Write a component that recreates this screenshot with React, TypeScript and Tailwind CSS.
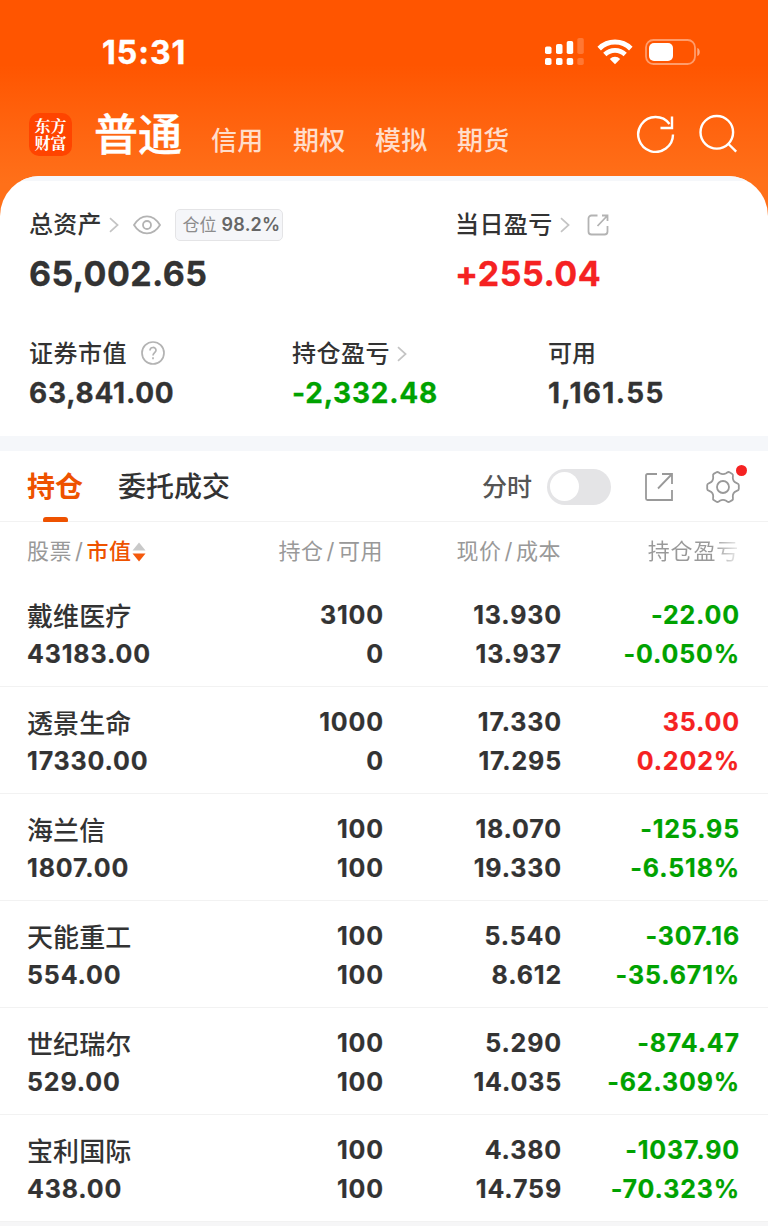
import clsx from 'clsx';

const accounts = ['信用', '期权', '模拟', '期货'];

const holdings = [
  { name: '戴维医疗', value: '43183.00', amount: '3100', available: '0', price: '13.930', cost: '13.937', profit: '-22.00', percent: '-0.050%' },
  { name: '透景生命', value: '17330.00', amount: '1000', available: '0', price: '17.330', cost: '17.295', profit: '35.00', percent: '0.202%' },
  { name: '海兰信', value: '1807.00', amount: '100', available: '100', price: '18.070', cost: '19.330', profit: '-125.95', percent: '-6.518%' },
  { name: '天能重工', value: '554.00', amount: '100', available: '100', price: '5.540', cost: '8.612', profit: '-307.16', percent: '-35.671%' },
  { name: '世纪瑞尔', value: '529.00', amount: '100', available: '100', price: '5.290', cost: '14.035', profit: '-874.47', percent: '-62.309%' },
  { name: '宝利国际', value: '438.00', amount: '100', available: '100', price: '4.380', cost: '14.759', profit: '-1037.90', percent: '-70.323%' },
];

function Chevron({ className }: { className?: string }) {
  return (
    <svg viewBox="0 0 10 16" fill="none" stroke="#c4c4c4" strokeWidth="1.7" className={clsx('h-4 w-2.5 shrink-0', className)}>
      <path d="M1 1.2 8.6 8 1 14.8" />
    </svg>
  );
}

function StatusBar() {
  return (
    <div className="flex h-[104px] items-center pl-[102px] pr-[67px]">
      <span className="pt-[2px] text-[32px] font-bold leading-none tracking-[1px] [-webkit-text-stroke:0.4px_white]">15:31</span>
      <svg viewBox="0 0 40 28" fill="#fff" className="ml-auto h-7 w-10">
        <rect x="1" y="8.5" width="6.5" height="7.5" rx="1.8" />
        <rect x="12" y="6" width="6.5" height="10" rx="1.8" />
        <rect x="22.7" y="3" width="6.5" height="13" rx="1.8" />
        <rect x="33.3" y="0" width="6.5" height="16" rx="1.8" opacity=".2" />
        <rect x="1" y="20" width="6.5" height="7" rx="1.8" />
        <rect x="12" y="20" width="6.5" height="7" rx="1.8" />
        <rect x="22.7" y="20" width="6.5" height="7" rx="1.8" />
        <rect x="33.3" y="20" width="6.5" height="7" rx="1.8" opacity=".2" />
      </svg>
      <svg viewBox="0 0 36 26" fill="none" stroke="#fff" strokeWidth="5" className="ml-[13px] h-[26px] w-9">
        <path d="M2.2 9.6a22.5 22.5 0 0 1 31.6 0" />
        <path d="M7.8 15.5a14.6 14.6 0 0 1 20.4 0" strokeWidth="4.6" />
        <path d="M18 25.3 12.8 20a7.4 7.4 0 0 1 10.4 0Z" fill="#fff" stroke="none" />
      </svg>
      <svg viewBox="0 0 56 26" fill="none" className="ml-3 h-[26px] w-14">
        <rect x="1" y="1" width="49" height="24" rx="7.5" stroke="#fff" strokeWidth="1.8" opacity=".42" />
        <rect x="4" y="4" width="24" height="18" rx="5" fill="#fff" />
        <path d="M52.3 9c3.3.8 3.3 7.2 0 8Z" fill="#fff" opacity=".5" />
      </svg>
    </div>
  );
}

function AccountTabs() {
  return (
    <div className="flex h-[112px] items-start pl-[29px] pr-[30px] pt-2">
      <div className="mt-px flex h-[43px] w-[43px] flex-col items-center justify-center rounded-[10px] bg-[#ff4400] font-['Liberation_Serif','Noto_Serif_CJK_SC','Noto_Sans_CJK_SC',serif] text-[16px] font-bold leading-[17px]">
        <span>东方</span>
        <span>财富</span>
      </div>
      <h1 className="ml-[22px] pt-px text-[44px] font-medium leading-[44px] [-webkit-text-stroke:0.4px_white]">普通</h1>
      <div className="ml-[29px] flex gap-[29.4px] pt-[15px]">
        {accounts.map((account) => (
          <span key={account} className="text-[26px] font-medium leading-[28px] tracking-[0.3px] text-[#ffddcb]">
            {account}
          </span>
        ))}
      </div>
      <svg viewBox="0 0 40 40" fill="none" stroke="#fff" strokeWidth="2.4" className="ml-auto mt-px h-10 w-10">
        <path d="M37 21.500A17.400 17.400 0 1 1 33.500 11" />
        <path d="M36 3.500v11.500H24.500" />
      </svg>
      <svg viewBox="0 0 40 40" fill="none" stroke="#fff" strokeWidth="2.4" className="ml-[22px] mt-[2px] h-10 w-10">
        <circle cx="18.800" cy="18.300" r="16.300" />
        <path d="m30 29.500 8.200 8.200" />
      </svg>
    </div>
  );
}

function Summary() {
  return (
    <section className="relative -mt-10 h-[260px] overflow-hidden rounded-t-[40px] bg-white pl-[29px] before:absolute before:inset-x-0 before:top-0 before:h-[5px] before:bg-[#f5f7fa]">
      <div className="flex pt-[31px]">
        <div className="w-[426px]">
          <div className="flex h-9 items-center text-[24px] font-medium tracking-[0.2px]">
            总资产
            <Chevron className="ml-[7px]" />
            <svg viewBox="0 0 28 20" fill="none" stroke="#b3b3b3" strokeWidth="1.8" className="ml-[14px] h-5 w-7">
              <path d="M1 10C4.500 4.300 8.800 1.300 14 1.300S23.500 4.300 27 10c-3.500 5.700-7.800 8.400-13 8.400S4.500 15.700 1 10Z" />
              <circle cx="14" cy="10" r="4" />
            </svg>
            <div className="ml-[14px] flex h-8 w-[108px] items-center whitespace-nowrap rounded-[5px] border border-[#e4e4e6] bg-[#f5f6f9] pl-[7px] text-[17px] font-normal leading-none tracking-normal text-[#8c8c8c]">
              仓位
              <span className="ml-[5px] text-[18px] font-semibold tracking-[0.2px] text-[#666]">98.2%</span>
            </div>
          </div>
          <p className="mt-[11px] text-[34px] font-bold leading-[40px] tracking-[0.4px] [-webkit-text-stroke:0.3px]">65,002.65</p>
        </div>
        <div>
          <div className="flex h-9 items-center text-[24px] font-medium tracking-[0.4px]">
            当日盈亏
            <Chevron className="ml-[7px]" />
            <svg viewBox="0 0 22 22" fill="none" stroke="#b3b3b3" strokeWidth="1.8" className="ml-[17px] h-[22px] w-[22px]">
              <path d="M10.500 1.500h-6a3 3 0 0 0-3 3v13a3 3 0 0 0 3 3h13a3 3 0 0 0 3-3V12M15 1.500h5.500V7M20.500 1.500 10.500 12" />
            </svg>
          </div>
          <p className="mt-[11px] text-[34px] font-bold leading-[40px] tracking-[0.5px] text-[#f52222] [-webkit-text-stroke:0.3px]">+255.04</p>
        </div>
      </div>

      <div className="mt-[42px] flex text-[28px] font-bold leading-[36px] tracking-[0.75px]">
        <div className="w-[263px]">
          <div className="flex h-9 items-center text-[24px] font-medium tracking-[0.5px]">
            证券市值
            <svg viewBox="0 0 24 24" fill="none" stroke="#b3b3b3" strokeWidth="1.7" className="-mt-[2px] ml-[14px] h-6 w-6">
              <circle cx="12" cy="12" r="11" />
              <path d="M9 9.500c0-4 6-4 6-.2 0 2.300-3 2.500-3 5.200M12 16.200v2" />
            </svg>
          </div>
          <p className="mt-[3px] [-webkit-text-stroke:0.3px]">63,841.00</p>
        </div>
        <div className="w-[256px]">
          <div className="flex h-9 items-center text-[24px] font-medium tracking-[0.5px]">
            持仓盈亏
            <Chevron className="ml-[7px]" />
          </div>
          <p className="mt-[3px] text-[#00a200] [-webkit-text-stroke:0.3px]">-2,332.48</p>
        </div>
        <div>
          <div className="flex h-9 items-center text-[24px] font-medium tracking-normal">可用</div>
          <p className="mt-[3px] tracking-[1.3px] [-webkit-text-stroke:0.3px]">1,161.55</p>
        </div>
      </div>
    </section>
  );
}

function Toolbar() {
  return (
    <div className="flex h-[71px] items-center border-b border-[#f2f2f2] pl-[27px] pr-[28px]">
      <div className="relative flex h-full items-center pt-[2px] text-[28px] font-bold text-[#ee5200]">
        持仓
        <span className="absolute bottom-[-1px] left-4 h-[5px] w-[25px] rounded-t-[3px] rounded-b-[1px] bg-[#ee5200]" />
      </div>
      <span className="ml-[35px] pt-[2px] text-[28px] font-medium">委托成交</span>
      <span className="ml-auto pt-[3px] text-[25px] font-medium text-[#555]">分时</span>
      <div className="ml-[15px] mt-px flex h-9 w-16 items-center rounded-full bg-[#e4e4e6] pl-[3px]">
        <span className="h-[29px] w-[29px] rounded-full bg-white" />
      </div>
      <svg viewBox="0 0 28 28" fill="none" stroke="#999" strokeWidth="1.8" className="ml-[34px] mt-px h-7 w-7">
        <path d="M12 1H2.500A1.500 1.500 0 0 0 1 2.500v23A1.500 1.500 0 0 0 2.500 27H27V17M17 1h10v10M27 1 13 15.500" />
      </svg>
      <div className="relative ml-[33px] mt-px">
        <svg viewBox="0 0 34 34" fill="none" stroke="#999" strokeWidth="1.8" strokeLinejoin="round" className="h-[34px] w-[34px]">
          <circle cx="17" cy="17" r="6" />
          <path d="M10.500 2.200c1.200-.7 2.200.3 3.300 1 2 1.200 4.400 1.200 6.400 0 1.100-.7 2.100-1.700 3.300-1l2.800 1.700c1.200.7.6 2 .5 3.400-.1 2.500 1.200 4.700 3.500 5.600 1.200.5 2.500.8 2.500 2.200v3.800c0 1.400-1.300 1.700-2.500 2.200-2.300.9-3.600 3.100-3.500 5.600.1 1.400.7 2.700-.5 3.400l-2.800 1.700c-1.200.7-2.200-.3-3.300-1-2-1.200-4.400-1.200-6.400 0-1.100.7-2.100 1.700-3.300 1l-2.800-1.700c-1.200-.7-.6-2-.5-3.400.1-2.500-1.200-4.700-3.500-5.600-1.200-.5-2.500-.8-2.500-2.200v-3.800c0-1.400 1.300-1.700 2.500-2.200 2.300-.9 3.600-3.100 3.500-5.600-.1-1.400-.7-2.700.5-3.400Z" />
        </svg>
        <span className="absolute -right-[7px] -top-[5px] h-[11px] w-[11px] rounded-full bg-[#f52222]" />
      </div>
    </div>
  );
}

export default function App() {
  return (
    <div className="h-[1226px] w-[768px] overflow-hidden bg-white font-['Inter','Noto_Sans_CJK_SC',sans-serif] text-[#333]">
      <header className="bg-linear-to-b from-[#ff5500] from-30% to-[#ff7019] to-85% text-white">
        <StatusBar />
        <AccountTabs />
      </header>
      <Summary />
      <div className="h-[15px] bg-[#f5f7fa]" />
      <Toolbar />

      <div className="grid h-[58px] grid-cols-[178px_178px_178px_178px] items-center pl-[27px] pt-px text-right text-[22px] tracking-[0.5px] text-[#999]">
        <div className="flex items-center">
          股票<span className="mx-[3px]">/</span>
          <span className="font-medium text-[#ee5200]">市值</span>
          <svg viewBox="0 0 14 20" className="ml-px h-5 w-3.5">
            <path d="M7 .5 13.500 8.500H.5Z" fill="#c9c9c9" />
            <path d="M7 19.500.5 11.500h13Z" fill="#f4590c" />
          </svg>
        </div>
        <div>持仓<span className="mx-[3px]">/</span>可用</div>
        <div>现价<span className="mx-[3px]">/</span>成本</div>
        <div className="bg-linear-to-r from-[#999] from-85% to-[#eee] bg-clip-text tracking-[0.8px] text-transparent">持仓盈亏</div>
      </div>

      <div className="border-b-[5px] border-[#f6f6f7]">
        {holdings.map((stock) => (
          <div
            key={stock.name}
            className="grid h-[107px] grid-cols-[178px_178px_178px_178px] border-b border-[#f2f2f2] pl-[28px] pt-4 text-right text-[25px] font-bold leading-[39px] tracking-[0.85px] [-webkit-text-stroke:0.2px]"
          >
            <div className="-ml-px text-left">
              <p className="relative top-px text-[26px] font-medium tracking-[0.1px] [-webkit-text-stroke:0px]">{stock.name}</p>
              <p>{stock.value}</p>
            </div>
            <div>
              <p>{stock.amount}</p>
              <p>{stock.available}</p>
            </div>
            <div>
              <p>{stock.price}</p>
              <p>{stock.cost}</p>
            </div>
            <div className={stock.profit.startsWith('-') ? 'text-[#00a200]' : 'text-[#f52222]'}>
              <p>{stock.profit}</p>
              <p>{stock.percent}</p>
            </div>
          </div>
        ))}
      </div>
    </div>
  );
}
